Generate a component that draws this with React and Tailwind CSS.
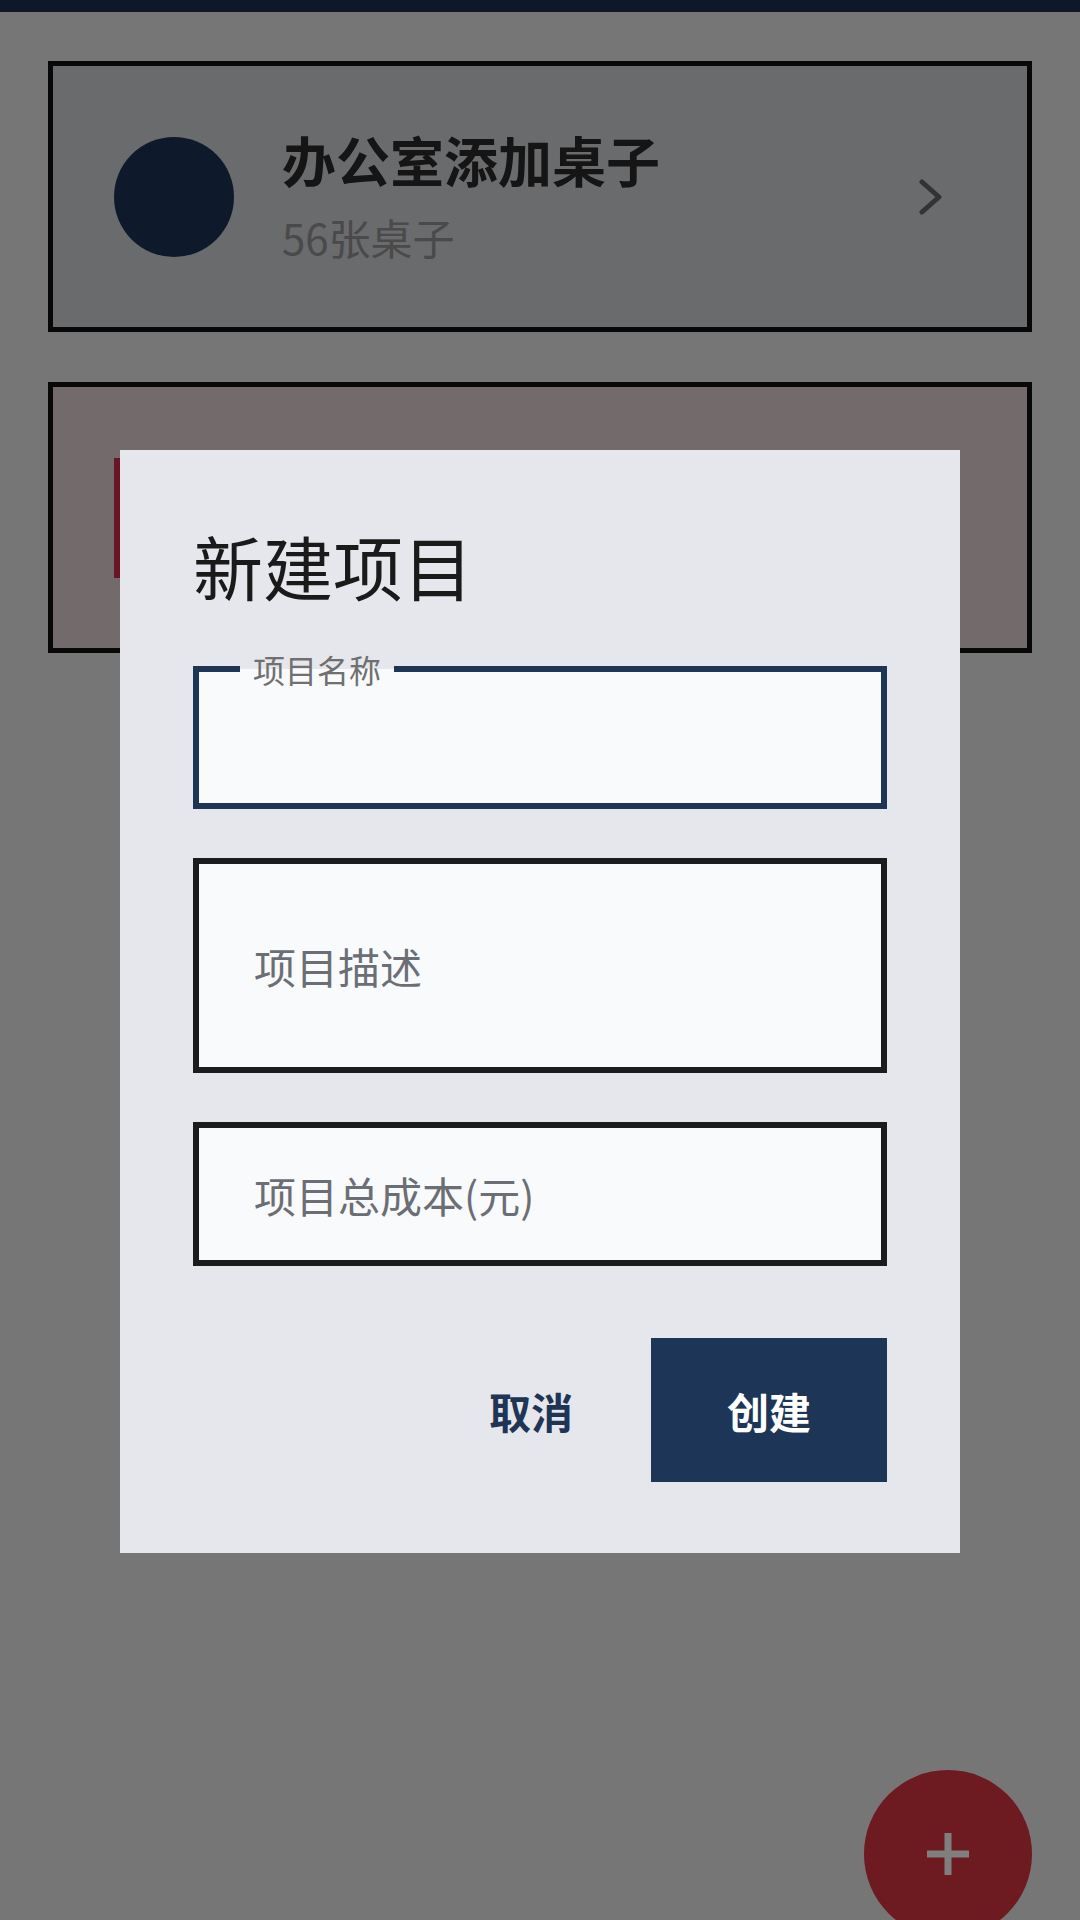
const font = { fontFamily: '"Noto Sans CJK SC", "Noto Sans", sans-serif' };

const ProjectCard = () => (
  <div className="mx-12 mt-[49px] h-[271px] border-[5px] border-[#111] bg-[#d4d6da] flex items-center pl-[61px] pr-[84px]">
    <div className="w-[120px] h-[120px] rounded-full bg-[#1d3557] shrink-0" />
    <div className="ml-12 flex-1 flex flex-col">
      <div className="text-[54px] leading-[64px] font-bold text-[#2a2a2a]">办公室添加桌子</div>
      <div className="mt-[17px] text-[42px] leading-[56px] text-[#949494]">56张桌子</div>
    </div>
    <svg width="24" height="36" viewBox="0 0 24 36" fill="none">
      <path d="M3 3 L20 18 L3 33" stroke="#666" strokeWidth="5" strokeLinecap="round" strokeLinejoin="round" />
    </svg>
  </div>
);

const TaskCard = () => (
  <div className="mx-12 mt-[50px] h-[271px] border-[5px] border-[#111] bg-[#e6d4d6] flex items-center pl-[61px]">
    <div className="w-[120px] h-[120px] bg-[#d62850] shrink-0" />
  </div>
);

const Field = ({ placeholder, height }) => (
  <input
    placeholder={placeholder}
    style={font}
    className={`w-full ${height} border-[6px] border-[#1c1c1c] bg-[#f9fafb] pl-[55px] text-[42px] text-[#222] placeholder:text-[#6b6e75] outline-none`}
  />
);

const NewProjectDialog = () => (
  <div className="w-[840px] bg-[#e6e7ec] flex flex-col px-[73px] pt-[74px] pb-[71px]">
    <h2 className="text-[70px] leading-[84px] font-normal text-[#1a1a1a]">新建项目</h2>

    <div className="relative mt-[58px] h-[143px] border-[6px] border-[#1e3556] bg-[#f9fafb]">
      <span className="absolute left-[41px] top-[-3px] -translate-y-1/2 px-[13px] text-[32px] leading-[36px] text-[#707070] bg-[linear-gradient(to_bottom,#e6e7ec_50%,#f9fafb_50%)]">
        项目名称
      </span>
      <input style={font} className="w-full h-full bg-transparent pl-[55px] text-[42px] text-[#222] outline-none" />
    </div>

    <div className="mt-[49px]">
      <Field placeholder="项目描述" height="h-[215px]" />
    </div>
    <div className="mt-[49px]">
      <Field placeholder="项目总成本(元)" height="h-[144px]" />
    </div>

    <div className="mt-[72px] flex justify-end gap-10">
      <button style={font} className="w-[160px] h-[144px] text-[42px] font-bold text-[#1e3556]">
        取消
      </button>
      <button style={font} className="w-[236px] h-[144px] bg-[#1d3557] text-[42px] font-bold text-white">
        创建
      </button>
    </div>
  </div>
);

export default function App() {
  return (
    <div className="relative w-[1080px] h-[1920px] overflow-hidden bg-[#ececec]" style={font}>
      <div className="h-[12px] bg-[#1e3056]" />
      <ProjectCard />
      <TaskCard />

      <button className="absolute left-[864px] top-[1770px] w-[168px] h-[168px] rounded-full bg-[#da3440] flex items-center justify-center">
        <svg width="42" height="42" viewBox="0 0 42 42">
          <path d="M21 0 V42 M0 21 H42" stroke="#fff" strokeWidth="7" />
        </svg>
      </button>

      <div className="absolute inset-0 bg-black/50 flex justify-center items-start pt-[450px]">
        <NewProjectDialog />
      </div>
    </div>
  );
}
